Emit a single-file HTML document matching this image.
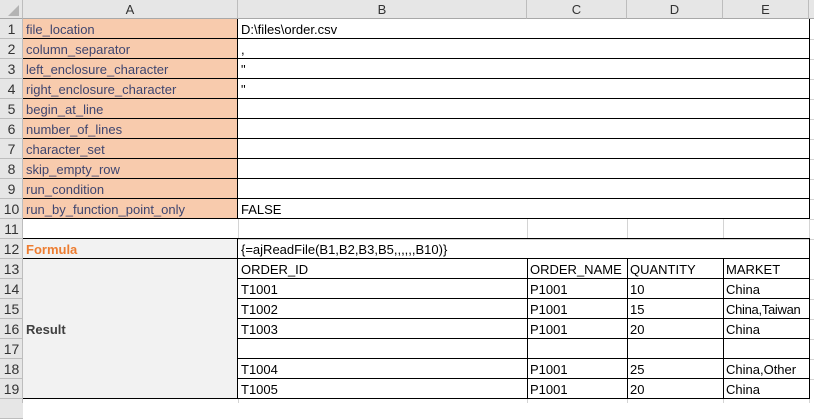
<!DOCTYPE html>
<html><head><meta charset="utf-8"><style>
*{margin:0;padding:0;box-sizing:border-box}
body{width:814px;height:403px;background:#fff;position:relative;overflow:hidden;font-family:"Liberation Sans",Arial,sans-serif;font-size:13px;color:#000}
.a{position:absolute}
.hl{position:absolute;height:1px;background:#d4d4d4}
.vl{position:absolute;width:1px;background:#d4d4d4}
.bh{position:absolute;height:1px;background:#000}
.bv{position:absolute;width:1px;background:#000}
.rn{position:absolute;left:0;width:23px;height:20px;line-height:21px;text-align:center;color:#333;background:#e6e6e6;border-bottom:1px solid #bdbdbd;font-size:14px}
.ch{position:absolute;top:0;height:19px;line-height:19px;text-align:center;background:#e6e6e6;border-right:1px solid #bdbdbd;border-bottom:1px solid #a8a8a8;color:#333;font-size:13px}
.t{position:absolute;height:20px;line-height:21px;white-space:nowrap;padding-left:3px}
.o{color:#3f4670}
</style></head><body>
<div class="hl" style="left:23px;top:239px;width:791px"></div>
<div class="vl" style="left:527px;top:219px;height:20px"></div>
<div class="vl" style="left:627px;top:219px;height:20px"></div>
<div class="vl" style="left:723px;top:219px;height:20px"></div>
<div class="vl" style="left:809px;top:19px;height:384px"></div>
<div class="hl" style="left:809px;top:39px;width:5px"></div><div class="hl" style="left:809px;top:59px;width:5px"></div><div class="hl" style="left:809px;top:79px;width:5px"></div><div class="hl" style="left:809px;top:99px;width:5px"></div><div class="hl" style="left:809px;top:119px;width:5px"></div><div class="hl" style="left:809px;top:139px;width:5px"></div><div class="hl" style="left:809px;top:159px;width:5px"></div><div class="hl" style="left:809px;top:179px;width:5px"></div><div class="hl" style="left:809px;top:199px;width:5px"></div><div class="hl" style="left:809px;top:219px;width:5px"></div><div class="hl" style="left:809px;top:279px;width:5px"></div><div class="hl" style="left:809px;top:299px;width:5px"></div><div class="hl" style="left:809px;top:319px;width:5px"></div><div class="hl" style="left:809px;top:339px;width:5px"></div><div class="hl" style="left:809px;top:359px;width:5px"></div><div class="hl" style="left:809px;top:379px;width:5px"></div>
<div class="vl" style="left:238px;top:219px;height:20px"></div>
<div class="vl" style="left:238px;top:399px;height:4px"></div>
<div class="vl" style="left:527px;top:399px;height:4px"></div>
<div class="vl" style="left:627px;top:399px;height:4px"></div>
<div class="vl" style="left:723px;top:399px;height:4px"></div>
<div class="a" style="left:23px;top:19px;width:215px;height:200px;background:#f8cbad"></div>
<div class="a" style="left:23px;top:239px;width:215px;height:160px;background:#f2f2f2"></div>
<div class="a" style="left:0;top:0;width:23px;height:19px;background:#e6e6e6;border-right:1px solid #bdbdbd;border-bottom:1px solid #a8a8a8"></div>
<svg class="a" style="left:7px;top:4px" width="13" height="13"><polygon points="12,1 12,12 1,12" fill="#b4b4b4"/></svg>
<div class="ch" style="left:23px;width:215px">A</div>
<div class="ch" style="left:238px;width:289px">B</div>
<div class="ch" style="left:527px;width:100px">C</div>
<div class="ch" style="left:627px;width:96px">D</div>
<div class="ch" style="left:723px;width:86px">E</div>
<div class="ch" style="left:809px;width:5px;border-right:none"></div>
<div class="rn" style="top:19px">1</div><div class="rn" style="top:39px">2</div><div class="rn" style="top:59px">3</div><div class="rn" style="top:79px">4</div><div class="rn" style="top:99px">5</div><div class="rn" style="top:119px">6</div><div class="rn" style="top:139px">7</div><div class="rn" style="top:159px">8</div><div class="rn" style="top:179px">9</div><div class="rn" style="top:199px">10</div><div class="rn" style="top:219px">11</div><div class="rn" style="top:239px">12</div><div class="rn" style="top:259px">13</div><div class="rn" style="top:279px">14</div><div class="rn" style="top:299px">15</div><div class="rn" style="top:319px">16</div><div class="rn" style="top:339px">17</div><div class="rn" style="top:359px">18</div><div class="rn" style="top:379px">19</div><div class="rn" style="top:399px"></div>
<div class="a" style="left:22px;top:19px;width:1px;height:384px;background:#bdbdbd"></div>
<div class="bh" style="left:23px;top:38px;width:787px"></div><div class="bh" style="left:23px;top:58px;width:787px"></div><div class="bh" style="left:23px;top:78px;width:787px"></div><div class="bh" style="left:23px;top:98px;width:787px"></div><div class="bh" style="left:23px;top:118px;width:787px"></div><div class="bh" style="left:23px;top:138px;width:787px"></div><div class="bh" style="left:23px;top:158px;width:787px"></div><div class="bh" style="left:23px;top:178px;width:787px"></div><div class="bh" style="left:23px;top:198px;width:787px"></div><div class="bh" style="left:23px;top:218px;width:787px"></div>
<div class="bh" style="left:23px;top:238px;width:787px"></div><div class="bh" style="left:23px;top:258px;width:787px"></div>
<div class="bh" style="left:238px;top:278px;width:572px"></div><div class="bh" style="left:238px;top:298px;width:572px"></div><div class="bh" style="left:238px;top:318px;width:572px"></div><div class="bh" style="left:238px;top:338px;width:572px"></div><div class="bh" style="left:238px;top:358px;width:572px"></div><div class="bh" style="left:238px;top:378px;width:572px"></div>
<div class="bh" style="left:23px;top:398px;width:787px"></div>
<div class="bv" style="left:237px;top:19px;height:200px"></div>
<div class="bv" style="left:237px;top:238px;height:161px"></div>
<div class="bv" style="left:809px;top:19px;height:200px"></div>
<div class="bv" style="left:809px;top:238px;height:161px"></div>
<div class="bv" style="left:527px;top:258px;height:141px"></div>
<div class="bv" style="left:627px;top:258px;height:141px"></div>
<div class="bv" style="left:723px;top:258px;height:141px"></div>
<div class="t o" style="left:23px;top:19px">file_location</div>
<div class="t o" style="left:23px;top:39px">column_separator</div>
<div class="t o" style="left:23px;top:59px">left_enclosure_character</div>
<div class="t o" style="left:23px;top:79px">right_enclosure_character</div>
<div class="t o" style="left:23px;top:99px">begin_at_line</div>
<div class="t o" style="left:23px;top:119px">number_of_lines</div>
<div class="t o" style="left:23px;top:139px">character_set</div>
<div class="t o" style="left:23px;top:159px">skip_empty_row</div>
<div class="t o" style="left:23px;top:179px">run_condition</div>
<div class="t o" style="left:23px;top:199px">run_by_function_point_only</div>
<div class="t" style="left:23px;top:239px;color:#ed7d31;font-weight:bold">Formula</div>
<div class="t" style="left:23px;top:319px;color:#404040;font-weight:bold">Result</div>
<div class="t" style="left:238px;top:19px">D:\files\order.csv</div>
<div class="t" style="left:238px;top:39px">,</div>
<div class="t" style="left:238px;top:59px">"</div>
<div class="t" style="left:238px;top:79px">"</div>
<div class="t" style="left:238px;top:199px">FALSE</div>
<div class="t" style="left:238px;top:239px">{=ajReadFile(B1,B2,B3,B5,,,,,,B10)}</div>
<div class="t" style="left:238px;top:259px">ORDER_ID</div>
<div class="t" style="left:238px;top:279px">T1001</div>
<div class="t" style="left:238px;top:299px">T1002</div>
<div class="t" style="left:238px;top:319px">T1003</div>
<div class="t" style="left:238px;top:359px">T1004</div>
<div class="t" style="left:238px;top:379px">T1005</div>
<div class="t" style="left:527px;top:259px">ORDER_NAME</div>
<div class="t" style="left:527px;top:279px">P1001</div>
<div class="t" style="left:527px;top:299px">P1001</div>
<div class="t" style="left:527px;top:319px">P1001</div>
<div class="t" style="left:527px;top:359px">P1001</div>
<div class="t" style="left:527px;top:379px">P1001</div>
<div class="t" style="left:627px;top:259px">QUANTITY</div>
<div class="t" style="left:627px;top:279px">10</div>
<div class="t" style="left:627px;top:299px">15</div>
<div class="t" style="left:627px;top:319px">20</div>
<div class="t" style="left:627px;top:359px">25</div>
<div class="t" style="left:627px;top:379px">20</div>
<div class="t" style="left:723px;top:259px">MARKET</div>
<div class="t" style="left:723px;top:279px">China</div>
<div class="t" style="left:723px;top:299px;letter-spacing:-0.3px">China,Taiwan</div>
<div class="t" style="left:723px;top:319px">China</div>
<div class="t" style="left:723px;top:359px">China,Other</div>
<div class="t" style="left:723px;top:379px">China</div>
</body></html>
